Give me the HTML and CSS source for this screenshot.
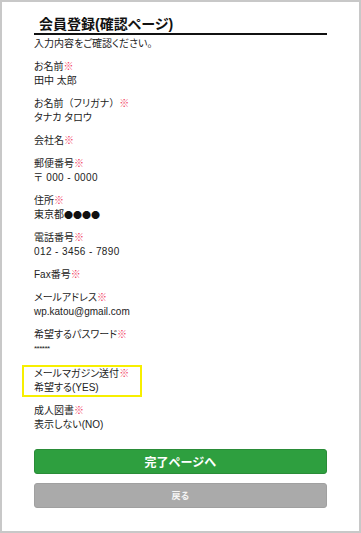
FILE: index.html
```html
<!DOCTYPE html>
<html lang="ja">
<head>
<meta charset="utf-8">
<title>会員登録(確認ページ)</title>
<link rel="stylesheet" href="styles.css">
</head>
<body>
<div class="frame">
  <div class="page">
    <h1 class="title">会員登録(確認ページ)</h1>
    <p class="intro">入力内容をご確認ください。</p>
    <dl class="fields">
      <div class="field"><dt>お名前<span class="req">※</span></dt><dd>田中 太郎</dd></div>
      <div class="field"><dt>お名前<span class="fw">（</span>フリガナ<span class="fw">）</span><span class="req">※</span></dt><dd>タナカ タロウ</dd></div>
      <div class="field"><dt>会社名<span class="req">※</span></dt></div>
      <div class="field"><dt>郵便番号<span class="req">※</span></dt><dd class="num">〒 000 - 0000</dd></div>
      <div class="field"><dt>住所<span class="req">※</span></dt><dd>東京都<span class="dots">●●●●</span></dd></div>
      <div class="field"><dt>電話番号<span class="req">※</span></dt><dd class="num">012 - 3456 - 7890</dd></div>
      <div class="field"><dt>Fax番号<span class="req">※</span></dt></div>
      <div class="field"><dt>メールアドレス<span class="req">※</span></dt><dd>wp.katou@gmail.com</dd></div>
      <div class="field"><dt>希望するパスワード<span class="req">※</span></dt><dd class="pw">******</dd></div>
      <div class="field highlight"><dt>メールマガジン送付<span class="req">※</span></dt><dd>希望する(YES)</dd></div>
      <div class="field"><dt>成人図書<span class="req">※</span></dt><dd>表示しない(NO)</dd></div>
    </dl>
    <div class="actions">
      <button class="btn btn-primary" type="button">完了ページへ</button>
      <button class="btn btn-back" type="button">戻る</button>
    </div>
  </div>
</div>
</body>
</html>
```
FILE: styles.css
```css
* { box-sizing: border-box; }
html, body { margin: 0; padding: 0; background: #fff; }
body {
  font-family: "Liberation Sans", "Noto Sans CJK JP", sans-serif;
  font-feature-settings: "palt";
  color: #222;
  font-size: 10px;
}
.frame {
  width: 361px;
  height: 533px;
  border: 2px solid #c8c8c8;
  padding: 13px 32px 0 32px;
}
.page { width: 293px; }
.title {
  margin: 0;
  padding-left: 5px;
  font-size: 14px;
  line-height: 18px;
  font-weight: bold;
  color: #111;
  border-bottom: 2px solid #111;
}
.intro {
  margin: 2px 0 9px 0;
  line-height: 14px;
}
.fields { margin: 0; padding: 0; }
.field { margin: 0 0 9px 0; }
.field dt, .field dd { margin: 0; line-height: 14px; }
.req { color: #f2405f; }
.fw { font-feature-settings: normal; }
.num { letter-spacing: 0.4px; }
.dots {
  font-family: "Noto Sans CJK JP", sans-serif;
  font-feature-settings: normal;
  font-size: 9px;
  color: #111;
}
.pw { font-size: 8px; letter-spacing: -0.5px; }
.highlight {
  width: 120px;
  margin: 0 0 7px -12px;
  padding: 0 0 0 10px;
  border: 2px solid #f7ef00;
}
.actions {
  margin-top: 17px;
  display: flex;
  flex-direction: column;
  gap: 9px;
}
.btn {
  height: 25px;
  width: 100%;
  border-radius: 3px;
  font-family: inherit;
  font-weight: bold;
  color: #fff;
  padding: 0;
  cursor: pointer;
}
.btn-primary {
  background: #2e9f3f;
  border: 1px solid #2a8c38;
  font-size: 12px;
}
.btn-back {
  background: #aaaaaa;
  border: 1px solid #a0a0a0;
  font-size: 9px;
  color: #f4f4f4;
}
```
